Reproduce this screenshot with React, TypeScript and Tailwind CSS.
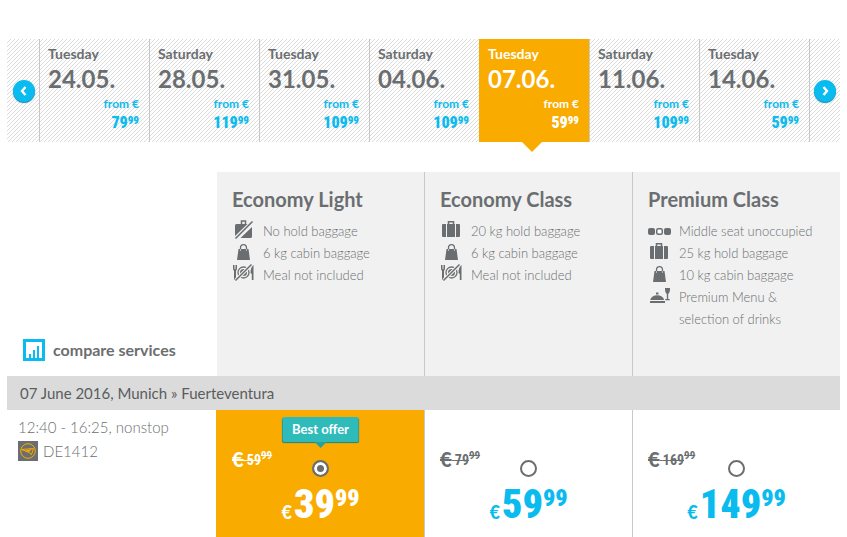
import { useState } from "react"
import type { ReactNode } from "react"

interface Day {
  weekday: string
  date: string
  euros: string
  cents: string
}

type IconName = "noCase" | "case" | "bag" | "noMeal" | "seats" | "menu"

interface Fare {
  id: string
  name: string
  services: { icon: IconName; text: string }[]
  oldEuros: string
  euros: string
  best?: boolean
}

const days: Day[] = [
  { weekday: "Tuesday", date: "24.05.", euros: "79", cents: "99" },
  { weekday: "Saturday", date: "28.05.", euros: "119", cents: "99" },
  { weekday: "Tuesday", date: "31.05.", euros: "109", cents: "99" },
  { weekday: "Saturday", date: "04.06.", euros: "109", cents: "99" },
  { weekday: "Tuesday", date: "07.06.", euros: "59", cents: "99" },
  { weekday: "Saturday", date: "11.06.", euros: "109", cents: "99" },
  { weekday: "Tuesday", date: "14.06.", euros: "59", cents: "99" },
]

const fares: Fare[] = [
  {
    id: "light",
    name: "Economy Light",
    services: [
      { icon: "noCase", text: "No hold baggage" },
      { icon: "bag", text: "6 kg cabin baggage" },
      { icon: "noMeal", text: "Meal not included" },
    ],
    oldEuros: "59",
    euros: "39",
    best: true,
  },
  {
    id: "economy",
    name: "Economy Class",
    services: [
      { icon: "case", text: "20 kg hold baggage" },
      { icon: "bag", text: "6 kg cabin baggage" },
      { icon: "noMeal", text: "Meal not included" },
    ],
    oldEuros: "79",
    euros: "59",
  },
  {
    id: "premium",
    name: "Premium Class",
    services: [
      { icon: "seats", text: "Middle seat unoccupied" },
      { icon: "case", text: "25 kg hold baggage" },
      { icon: "bag", text: "10 kg cabin baggage" },
      { icon: "menu", text: "Premium Menu & selection of drinks" },
    ],
    oldEuros: "169",
    euros: "149",
  },
]

const icons: Record<IconName, ReactNode> = {
  noCase: (
    <>
      <path d="M9.500 4.500V1h4v3.500" fill="none" stroke="#6b6e70" strokeWidth="1.500" />
      <path d="M4.500 4H15.500L3 16V5.500Q3 4 4.500 4zM20 7V16.500Q20 18 18.500 18H8.500z" fill="#6b6e70" />
      <path d="M3.500 18.500L20.500 1.500" stroke="#6b6e70" strokeWidth="1.600" />
    </>
  ),
  case: (
    <>
      <path d="M8.500 4.500V1.700h5v2.800" fill="none" stroke="#6b6e70" strokeWidth="1.500" />
      <path d="M3 4h3v13H3q-1 0-1-1V5q0-1 1-1zM7 4h8v13H7zM16 4h3q1 0 1 1v11q0 1-1 1h-3z" fill="#6b6e70" />
    </>
  ),
  bag: (
    <>
      <path d="M8.500 9V6a3 3.300 0 0 1 6 0v3" fill="none" stroke="#6b6e70" strokeWidth="1.300" />
      <path d="M6.500 7h10l1.500 11H5z" fill="#6b6e70" />
      <path d="M8.500 7v2M14.500 7v2" stroke="#b5b6b7" />
    </>
  ),
  noMeal: (
    <>
      <path d="M1.500 1v4M3 1v4M4.500 1v4" stroke="#6b6e70" strokeWidth="1" />
      <path d="M1 5h4L4 7v9H2V7zM21.500 1v15h-1.700v-6l-1.300-1q0-6 3-8z" fill="#6b6e70" />
      <circle cx="11.500" cy="8.500" r="5.500" fill="none" stroke="#6b6e70" strokeWidth="1.300" />
      <circle cx="11.500" cy="8.500" r="3.500" fill="#6b6e70" />
      <path d="M3.500 16.500L19.500 .5" stroke="#f1f1f1" strokeWidth="3.500" />
      <path d="M3.500 16.500L19.500 .5" stroke="#6b6e70" strokeWidth="1.500" />
    </>
  ),
  seats: (
    <>
      <rect x="0" y="8" width="7" height="7" rx="2" fill="#6b6e70" />
      <rect x="8.750" y="8.750" width="5.500" height="5.500" rx="1.500" fill="#fff" stroke="#6b6e70" strokeWidth="1.500" />
      <rect x="16" y="8" width="7" height="7" rx="2" fill="#6b6e70" />
    </>
  ),
  menu: (
    <>
      <path d="M2.200 14a7.300 6.500 0 0 1 14 0zM2 15h15v2H2zM8 6.500h2.500v2H8z" fill="#6b6e70" />
      <path d="M17 2h5q.2 4.500-1.800 6v5h1.500v1.200H17.300V13h1.500V8q-2-1.500-1.800-6z" fill="#6b6e70" />
    </>
  ),
}

const ServiceIcon = ({ name }: { name: IconName }) => (
  <svg viewBox="0 0 23 22" className="h-[22px] w-[23px] shrink-0" aria-hidden="true">
    {icons[name]}
  </svg>
)

const ArrowButton = ({ label, path }: { label: string; path: string }) => (
  <button
    type="button"
    aria-label={label}
    className="flex size-[22px] items-center justify-center rounded-full bg-[#0abbef] shadow-[0_1px_1px_#0885aa]"
  >
    <svg viewBox="0 0 12 12" className="size-3" fill="none" stroke="#fff" strokeWidth="2.400" aria-hidden="true">
      <path d={path} />
    </svg>
  </button>
)

const hatch =
  "bg-[linear-gradient(135deg,#fff_40%,#dcdcdc_40%,#dcdcdc_60%,#fff_60%)] bg-size-[4px_4px]"

const DateStrip = () => {
  const [selected, setSelected] = useState(4)

  return (
    <nav aria-label="Departure date" className={`flex ${hatch}`}>
      <div className="flex w-8 items-center justify-center pl-0.5">
        <ArrowButton label="Earlier dates" path="M7.500 2L4 6l3.500 4" />
      </div>
      {days.map((day, idx) => {
        const active = idx === selected
        return (
          <button
            key={day.date}
            type="button"
            aria-pressed={active}
            onClick={() => setSelected(idx)}
            className={`relative flex flex-1 flex-col border-l pt-1.5 pr-2.5 pb-2.5 pl-2 text-left font-bold ${
              active ? "border-[#f9ab00] bg-[#f9ab00] text-white" : "border-[#c8c8c8] text-[#6b6e70]"
            }`}
          >
            <span className="text-sm leading-[18px]">{day.weekday}</span>
            <span className="text-2xl leading-8">{day.date}</span>
            <span className={`flex flex-col items-end self-stretch ${active ? "text-white" : "text-[#0abbef]"}`}>
              <span className="text-xs leading-[18px]">from €</span>
              <span className="flex items-start font-['Roboto_Condensed','Liberation_Sans_Narrow',sans-serif] font-black">
                <span className="text-base leading-[19px]">{day.euros}</span>
                <span className="text-[11px] leading-[15px]">{day.cents}</span>
              </span>
            </span>
            {active && (
              <span className="absolute top-full left-[42px] border-x-10 border-t-10 border-x-transparent border-t-[#f9ab00]" />
            )}
          </button>
        )
      })}
      <div className="flex w-[31px] items-center justify-center border-l border-[#c8c8c8]">
        <ArrowButton label="Later dates" path="M4.500 2L8 6l-3.500 4" />
      </div>
    </nav>
  )
}

const FareHeader = ({ fare, first }: { fare: Fare; first: boolean }) => (
  <section className={`flex-1 border-l bg-[#f1f1f1] bg-clip-padding px-[15px] pt-[11px] ${first ? "border-transparent" : "border-[#c8c8c8]"}`}>
    <h2 className="text-xl leading-8 font-bold text-[#6b6e70]">{fare.name}</h2>
    <ul className="mt-[5px] text-[13px] leading-[22px] font-light text-[#6b6e70]">
      {fare.services.map((service) => (
        <li key={service.text} className="flex items-start gap-2">
          <ServiceIcon name={service.icon} />
          <span>{service.text}</span>
        </li>
      ))}
    </ul>
  </section>
)

interface FarePriceProps {
  fare: Fare
  checked: boolean
  onSelect: () => void
}

const FarePrice = ({ fare, checked, onSelect }: FarePriceProps) => (
  <label
    className={`relative flex-1 cursor-pointer border-l px-[15px] pt-10 pb-3 ${
      checked ? "border-[#f9ab00] bg-[#f9ab00] text-white" : "border-[#c8c8c8] text-[#6b6e70]"
    }`}
  >
    {fare.best && (
      <span className="absolute top-[7px] left-1/2 -translate-x-1/2 rounded-xs bg-[#2fbbb9] px-2.5 text-[13px] leading-[25px] font-bold whitespace-nowrap text-white shadow-[0_1px_1px_#1f7f7e]">
        Best offer
        <span className="absolute top-full left-1/2 -translate-x-1/2 border-x-6 border-t-6 border-x-transparent border-t-[#27a09e]" />
      </span>
    )}
    <span className="grid grid-cols-3 items-start">
      <s className="flex items-start font-['Roboto_Condensed','Liberation_Sans_Narrow',sans-serif] font-bold whitespace-nowrap">
        <span className="font-['Lato',sans-serif] text-xl leading-[18px] font-black whitespace-pre">€</span>
        <span className="text-sm leading-5 whitespace-pre"> {fare.oldEuros}</span>
        <span className="text-[11px] leading-3">99</span>
      </s>
      <input
        type="radio"
        name="fare"
        checked={checked}
        onChange={onSelect}
        aria-label={fare.name}
        className="mt-2.5 size-[17px] appearance-none justify-self-center rounded-full border-2 border-[#6b6e70] bg-white checked:bg-[#6b6e70] checked:shadow-[inset_0_0_0_3px_#fff]"
      />
    </span>
    <span
      className={`mt-2 flex items-start justify-center font-['Roboto_Condensed','Liberation_Sans_Narrow',sans-serif] font-black ${
        checked ? "text-white" : "text-[#0abbef]"
      }`}
    >
      <span className="mt-[15px] mr-0.5 font-['Lato',sans-serif] text-lg leading-6">€</span>
      <span className="text-[40px] leading-10">{fare.euros}</span>
      <span className="text-2xl leading-[26px]">99</span>
    </span>
  </label>
)

export default function App() {
  const [fareId, setFareId] = useState("light")

  return (
    <main className="min-h-screen bg-white px-[7px] pt-[39px] font-['Lato','Open_Sans',sans-serif] text-[#6b6e70]">
      <DateStrip />

      <div className="mt-[30px] flex min-h-[204px]">
        <div className="flex w-[209px] shrink-0 items-end pb-[14px] pl-4">
          <a href="#services" className="flex items-center gap-2 text-base font-bold">
            <svg viewBox="0 0 22 22" className="size-[22px]" aria-hidden="true">
              <rect x="1.500" y="1.500" width="19" height="19" fill="#fff" stroke="#0abbef" strokeWidth="3" />
              <path d="M7 19v-4M11 19v-8M15 19V7" stroke="#0abbef" strokeWidth="2" />
            </svg>
            compare services
          </a>
        </div>
        {fares.map((fare, idx) => (
          <FareHeader key={fare.id} fare={fare} first={idx === 0} />
        ))}
      </div>

      <h3 className="bg-[#dbdbdb] px-[13px] text-[15px] leading-[34px] text-[#5a5c5e]">
        07 June 2016, Munich » Fuerteventura
      </h3>

      <div className="flex">
        <div className="w-[209px] shrink-0 pt-[5px] pl-[11px] text-[15px] leading-6 font-light">
          <p>12:40 - 16:25, nonstop</p>
          <p className="flex items-center gap-[5px]">
            <svg viewBox="0 0 20 20" className="size-5" fill="none" stroke="#f9ab00" aria-hidden="true">
              <rect width="20" height="20" fill="#6b6e70" stroke="none" />
              <circle cx="10" cy="10" r="7.300" />
              <path d="M3.500 8.500L15.500 7.500L13.500 13.500L11 11.500z" />
              <path d="M7 9.500L14 8L11 11z" fill="#f9ab00" stroke="none" />
            </svg>
            DE1412
          </p>
        </div>
        {fares.map((fare) => (
          <FarePrice
            key={fare.id}
            fare={fare}
            checked={fare.id === fareId}
            onSelect={() => setFareId(fare.id)}
          />
        ))}
      </div>
    </main>
  )
}
